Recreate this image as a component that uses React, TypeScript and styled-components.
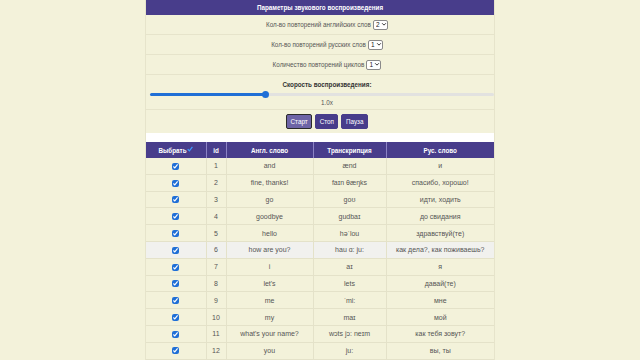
import React, { useState } from "react";
import styled, { createGlobalStyle } from "styled-components";

const words = [
  { id: 1, en: "and", tr: "ænd", ru: "и" },
  { id: 2, en: "fine, thanks!", tr: "faɪn θæŋks", ru: "спасибо, хорошо!" },
  { id: 3, en: "go", tr: "ɡoʊ", ru: "идти, ходить" },
  { id: 4, en: "goodbye", tr: "ɡudbaɪ", ru: "до свидания" },
  { id: 5, en: "hello", tr: "həˈlou", ru: "здравствуй(те)" },
  { id: 6, en: "how are you?", tr: "hau ɑ: ju:", ru: "как дела?, как поживаешь?" },
  { id: 7, en: "i", tr: "aɪ", ru: "я" },
  { id: 8, en: "let's", tr: "lets", ru: "давай(те)" },
  { id: 9, en: "me", tr: "ˈmi:", ru: "мне" },
  { id: 10, en: "my", tr: "maɪ", ru: "мой" },
  { id: 11, en: "what's your name?", tr: "wɔts jɔ: neɪm", ru: "как тебя зовут?" },
  { id: 12, en: "you", tr: "ju:", ru: "вы, ты" },
];

function Select({ value }: { value: string }) {
  return (
    <SelectWrap>
      <Picker defaultValue={value}>
        <option>1</option>
        <option>2</option>
        <option>3</option>
      </Picker>
      <Chevron viewBox="0 0 8 8">
        <path d="M1.5 3 L4 5.5 L6.5 3" fill="none" stroke="#333" strokeWidth="1.3" />
      </Chevron>
    </SelectWrap>
  );
}

export default function App() {
  const [speed, setSpeed] = useState(1.0);
  const pct = ((speed - 0.5) / 1.5) * 100;

  return (
    <>
      <GlobalStyle />
      <Page>
        <Panel>
          <PanelTitle>Параметры звукового воспроизведения</PanelTitle>
          <SettingRow>
            Кол-во повторений английских слов
            <Select value="2" />
          </SettingRow>
          <SettingRow>
            Кол-во повторений русских слов
            <Select value="1" />
          </SettingRow>
          <SettingRow>
            Количество повторений циклов
            <Select value="1" />
          </SettingRow>
          <SpeedRow>
            <SpeedLabel>Скорость воспроизведения:</SpeedLabel>
            <Slider
              type="range"
              min={0.5}
              max={2}
              step={0.1}
              value={speed}
              onChange={(e) => setSpeed(parseFloat(e.target.value))}
              style={{
                background: `linear-gradient(to right, #1f6fd6 0%, #1f6fd6 ${pct}%, #e2e2e0 ${pct}%, #e2e2e0 100%)`,
              }}
            />
            <SpeedValue>{speed.toFixed(1)}x</SpeedValue>
          </SpeedRow>
          <ButtonRow>
            <ActionButton $active>Старт</ActionButton>
            <ActionButton>Стоп</ActionButton>
            <ActionButton>Пауза</ActionButton>
          </ButtonRow>
        </Panel>
        <Gap />
        <WordTable>
          <colgroup>
            <col style={{ width: 60 }} />
            <col style={{ width: 20 }} />
            <col style={{ width: 87 }} />
            <col style={{ width: 73 }} />
            <col style={{ width: 108 }} />
          </colgroup>
          <thead>
            <tr>
              <Th>
                Выбрать
                <CheckMark viewBox="0 0 10 10">
                  <path d="M1.2 5.2 L4 8 L9 1.5" fill="none" stroke="#3d9bff" strokeWidth="2" />
                </CheckMark>
              </Th>
              <Th>id</Th>
              <Th>Англ. слово</Th>
              <Th>Транскрипция</Th>
              <Th>Рус. слово</Th>
            </tr>
          </thead>
          <tbody>
            {words.map((w) => (
              <Row key={w.id} $hover={w.id === 6}>
                <Td>
                  <Box type="checkbox" defaultChecked />
                </Td>
                <Td>{w.id}</Td>
                <Td>{w.en}</Td>
                <Td>{w.tr}</Td>
                <Td>{w.ru}</Td>
              </Row>
            ))}
          </tbody>
        </WordTable>
      </Page>
    </>
  );
}

const GlobalStyle = createGlobalStyle`
  html, body {
    margin: 0;
    background: #f3f2da;
    font-family: "Liberation Sans", Arial, sans-serif;
    color: #555;
  }
`;

const Page = styled.div`
  width: 348px;
  margin: 0 auto;
  border-left: 1px solid #e6e4cb;
  border-right: 1px solid #e6e4cb;
`;

const Panel = styled.div`
  display: flex;
  flex-direction: column;
`;

const PanelTitle = styled.div`
  height: 15px;
  line-height: 15px;
  background: #483d8b;
  color: #fff;
  font-size: 6.3px;
  font-weight: bold;
  text-align: center;
`;

const SettingRow = styled.div`
  height: 19px;
  display: flex;
  align-items: center;
  justify-content: center;
  gap: 2px;
  padding-left: 14px;
  font-size: 6.3px;
  border-bottom: 1px solid #e6e4cb;
`;

const SelectWrap = styled.span`
  position: relative;
  display: inline-flex;
`;

const Picker = styled.select`
  -webkit-appearance: none;
  appearance: none;
  width: 15px;
  height: 10px;
  padding: 0 0 0 2px;
  font-size: 6.5px;
  font-family: "Liberation Sans", Arial, sans-serif;
  border: 1px solid #8a8a8a;
  border-radius: 2px;
  background: #fff;
  color: #222;
`;

const Chevron = styled.svg`
  position: absolute;
  right: 1px;
  top: 1.5px;
  width: 6px;
  height: 6px;
  pointer-events: none;
`;

const SpeedRow = styled.div`
  display: flex;
  flex-direction: column;
  align-items: center;
  padding: 5px 0 2px;
  border-bottom: 1px solid #e6e4cb;
`;

const SpeedLabel = styled.div`
  font-size: 6.3px;
  font-weight: bold;
  color: #333;
  line-height: 10px;
  padding-left: 14px;
`;

const Slider = styled.input`
  -webkit-appearance: none;
  appearance: none;
  width: calc(100% - 4px);
  margin: 3px 0 3px 4px;
  height: 3px;
  border-radius: 2px;
  outline: none;
  &::-webkit-slider-thumb {
    -webkit-appearance: none;
    width: 7px;
    height: 7px;
    border-radius: 50%;
    background: #1f6fd6;
    cursor: pointer;
  }
`;

const SpeedValue = styled.div`
  font-size: 6.3px;
  line-height: 8px;
  padding-left: 14px;
`;

const ButtonRow = styled.div`
  display: flex;
  justify-content: center;
  gap: 3px;
  padding: 4px 0 3px 14px;
`;

const ActionButton = styled.button<{ $active?: boolean }>`
  height: 15px;
  padding: 0 3.5px;
  font-size: 6.3px;
  font-family: "Liberation Sans", Arial, sans-serif;
  color: #fff;
  background: ${(p) => (p.$active ? "#6d64a6" : "#483d8b")};
  border: 1px solid ${(p) => (p.$active ? "#2a2a2a" : "#483d8b")};
  border-radius: 2px;
`;

const Gap = styled.div`
  height: 9px;
  margin-top: 1px;
  background: #fff;
`;

const WordTable = styled.table`
  width: 100%;
  border-collapse: collapse;
  table-layout: fixed;
  font-size: 7px;
`;

const Th = styled.th`
  height: 16px;
  padding: 0;
  background: #483d8b;
  color: #fff;
  font-size: 6.3px;
  font-weight: bold;
  text-align: center;
  border-left: 1px solid #8c83c4;
  &:first-child {
    border-left: none;
  }
`;

const CheckMark = styled.svg`
  width: 6px;
  height: 6px;
  margin-left: 0.5px;
  vertical-align: 1px;
`;

const Row = styled.tr<{ $hover?: boolean }>`
  background: ${(p) => (p.$hover ? "#f1f1ee" : "transparent")};
`;

const Td = styled.td`
  height: 15.8px;
  padding: 0;
  text-align: center;
  border-bottom: 1px solid #e4e2c9;
  border-left: 1px solid #e4e2c9;
  &:first-child {
    border-left: none;
  }
`;

const Box = styled.input`
  width: 7px;
  height: 7px;
  margin: 0;
  accent-color: #1f6fd6;
  vertical-align: middle;
`;
